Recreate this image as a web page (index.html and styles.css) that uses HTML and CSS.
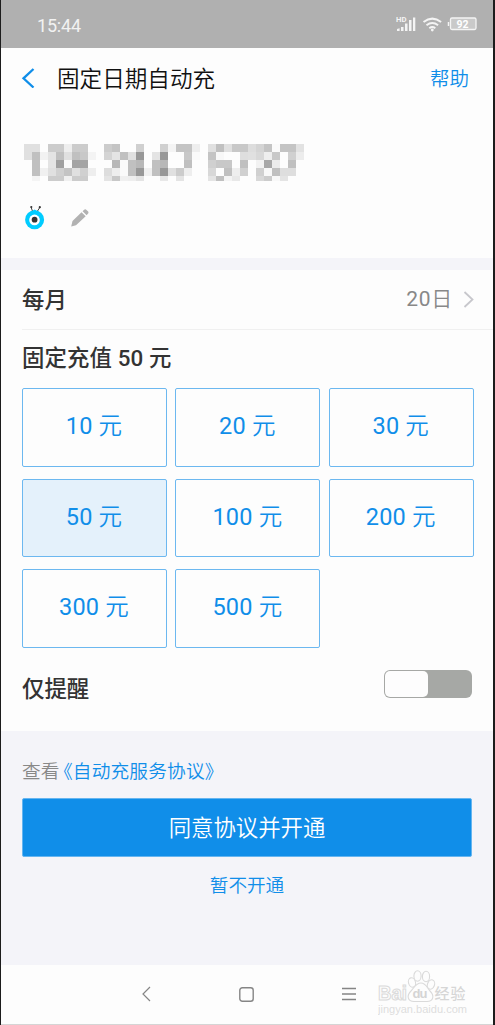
FILE: index.html
```html
<!DOCTYPE html>
<html lang="zh-CN">
<head>
<meta charset="utf-8">
<title>固定日期自动充</title>
<link rel="stylesheet" href="styles.css">
</head>
<body>
<div class="screen">
  <div class="status">
    <span class="time">15:44</span>
    <svg class="status-icons" width="82" height="18" viewBox="0 0 82 18" fill="none">
      <text class="hd" x="0" y="5.500" textLength="10.500" lengthAdjust="spacingAndGlyphs">HD</text>
      <path d="M1 15v-2l2.600-.7V15zM5 15v-4h2.500v4zM9 15V7.500h2.500V15zM13 15V4h2.500v11zM17 15V1.500h2.300V15z" fill="#f4f4f4"/>
      <path d="M27.500 6q8.800-6.800 17.600 0M30.500 9.200q5.800-4.300 11.600 0M33.300 12.200q3-2.200 6 0" stroke="#f4f4f4" stroke-width="2"/>
      <circle cx="36.300" cy="14" r="1.400" fill="#f4f4f4"/>
      <rect x="54.500" y="2" width="25.500" height="11.500" rx="1.500" fill="#c9c9c9" stroke="#f4f4f4" stroke-width="1.300"/>
      <path d="M52.500 6v4" stroke="#f4f4f4" stroke-width="1.500"/>
      <text class="pct" x="66.500" y="11.500">92</text>
    </svg>
  </div>
  <header class="nav">
    <svg class="back" width="14" height="20" viewBox="0 0 14 20" fill="none"><path d="M12.500 1L2.500 10.300l10 9.200" stroke="#108ee9" stroke-width="2.300"/></svg>
    <h1 class="title">固定日期自动充</h1>
    <a class="help">帮助</a>
  </header>
  <section class="account">
    <svg class="masked" id="masked" width="280" height="38" viewBox="0 0 280 38" shape-rendering="crispEdges"></svg>
    <div class="account-icons">
      <svg width="20" height="25" viewBox="0 0 20 25" fill="none">
        <path d="M7.600 6.500L6.200 2.500M12.500 6l2.300-3.500" stroke="#444" stroke-width="1"/>
        <circle cx="6.300" cy="2" r="1.100" fill="#333"/><circle cx="14.800" cy="2.200" r="1.100" fill="#333"/>
        <path d="M7 6.500L9.600 4.500l3 2z" fill="#0cf"/>
        <circle cx="9.600" cy="14.700" r="9.500" fill="#0cf"/>
        <circle cx="9.500" cy="14.900" r="5.300" fill="#fff"/><circle cx="9.600" cy="14.700" r="2.900" fill="#333"/>
      </svg>
      <svg class="pencil" width="18" height="18" viewBox="0 0 18 18" fill="#b2b2b2">
        <path d="M.2 17.600L1.500 12 10.500 3.200l4.200 4-9.700 9.100zM11.600 2.200l1.300-1.300c.9-.8 1.800-.8 2.600 0l1.400 1.400c.8.800.8 1.700 0 2.500l-1.300 1.400z"/>
      </svg>
    </div>
  </section>
  <main class="settings">
    <div class="month">
      <b class="label">每月</b>
      <span class="date">20<span class="thin">日</span></span>
      <svg width="12" height="17" viewBox="0 0 12 17" fill="none"><path d="M1.500 1l8 7.500-8 7.500" stroke="#c7c7cc" stroke-width="1.800"/></svg>
    </div>
    <h2 class="amount-title">固定充值 50 元</h2>
    <div class="amounts">
      <div class="amount">10 <span class="thin">元</span></div>
      <div class="amount">20 <span class="thin">元</span></div>
      <div class="amount">30 <span class="thin">元</span></div>
      <div class="amount selected">50 <span class="thin">元</span></div>
      <div class="amount">100 <span class="thin">元</span></div>
      <div class="amount">200 <span class="thin">元</span></div>
      <div class="amount">300 <span class="thin">元</span></div>
      <div class="amount">500 <span class="thin">元</span></div>
    </div>
    <div class="remind">
      <b class="label">仅提醒</b>
      <div class="switch"><div class="knob"></div></div>
    </div>
  </main>
  <footer class="actions">
    <p class="terms">查看<a class="terms-link">《自动充服务协议》</a></p>
    <div class="confirm">同意协议并开通</div>
    <a class="decline">暂不开通</a>
  </footer>
  <div class="system">
    <svg width="9" height="16" viewBox="0 0 9 16" fill="none" stroke="#858585" stroke-width="1.200"><path d="M8 1L1 8l7 7"/></svg>
    <svg width="15" height="15" viewBox="0 0 15 15" fill="none" stroke="#858585" stroke-width="1.400"><rect x=".8" y=".8" width="13.400" height="13.400" rx="2.500"/></svg>
    <svg width="14" height="14" viewBox="0 0 14 14" fill="none" stroke="#858585" stroke-width="1.300"><path d="M0 1.500h14M0 7h14M0 12.500h14"/></svg>
    <svg class="watermark" width="92" height="50" viewBox="0 0 92 50">
      <g fill="#fdfdfd" stroke="#dadada" stroke-width="1.100">
        <ellipse cx="34" cy="14.500" rx="3.500" ry="4.800" transform="rotate(-15 34 14.500)"/>
        <ellipse cx="39.500" cy="8" rx="3.600" ry="5.200"/>
        <ellipse cx="48" cy="8.500" rx="3.600" ry="5.200"/>
        <ellipse cx="53" cy="16.500" rx="3.500" ry="4.800" transform="rotate(20 53 16.500)"/>
        <path d="M43 15c5 0 6 5 9 8 5 5 3 10.500-3 10.500H36c-6 0-8-5.500-3-10.500 3-3 5-8 10-8z"/>
        <text class="wm-brand" x="0" y="31.500" textLength="29" lengthAdjust="spacingAndGlyphs">Bai</text>
      </g>
      <text class="wm-du" x="34.500" y="30" textLength="15">du</text>
      <text class="wm-cn" x="56.500" y="30.500" textLength="31">经验</text>
      <text class="wm-url" x="0" y="45" textLength="89" lengthAdjust="spacingAndGlyphs">jingyan.baidu.com</text>
    </svg>
  </div>
</div>
<script src="mosaic.js"></script>
</body>
</html>
```
FILE: styles.css
```css
* { box-sizing: border-box; }
body {
  margin: 0;
  height: 1025px;
  padding: 0 2px 0 1px;
  background: #1c1c1c;
  font-family: Roboto, "Noto Sans CJK SC", sans-serif;
  color: #333;
}
h1, h2, p { margin: 0; }
svg { display: block; flex: none; }
.screen {
  height: 1025px;
  background: #fdfdfd;
  display: flex;
  flex-direction: column;
  border-bottom: 1px solid #d5d5d5;
  overflow: hidden;
}
.status {
  flex: none;
  height: 48px;
  padding: 2px 15px 0 36px;
  display: flex;
  align-items: center;
  justify-content: space-between;
  background: #b0b0b0;
  color: #f2f2f2;
}
.time { font-size: 18px; letter-spacing: -.2px; }
.thin { font-weight: 350; }
.hd { font: bold 7px Roboto, sans-serif; fill: #f4f4f4; }
.pct { font: bold 10.500px Roboto, sans-serif; fill: #fff; text-anchor: middle; }
.nav {
  flex: none;
  height: 60px;
  padding: 0 24px 0 20px;
  display: flex;
  align-items: center;
}
.title {
  flex: 1;
  margin-left: 22px;
  padding-bottom: 2px;
  font-size: 22.600px;
  font-weight: 350;
  color: #111;
}
.help { padding-bottom: 2px; font-size: 19.500px; font-weight: 350; color: #108ee9; }
.account { flex: none; height: 150px; padding: 36px 23px 0; }
.account-icons { display: flex; gap: 26px; margin: 23px 0 0 1px; }
.pencil { margin-top: 4px; }
.settings {
  flex: none;
  height: 473px;
  border-top: 12px solid #f4f4f9;
  padding-left: 21px;
}
.month {
  height: 60px;
  display: flex;
  align-items: center;
  border-bottom: 1px solid #f0f0f0;
  padding-right: 18px;
}
.label { font-size: 22.400px; font-weight: 500; padding-bottom: 4px; }
.date { margin: 0 10px 0 auto; padding-bottom: 5px; font-size: 21px; letter-spacing: .7px; color: #888; }
.amount-title { height: 58px; line-height: 57px; font-size: 22.400px; font-weight: 500; letter-spacing: .1px; }
.amounts {
  display: grid;
  grid-template-columns: repeat(3, 145px);
  grid-auto-rows: 78.500px;
  gap: 12px 8.400px;
}
.amount {
  border: 1px solid #6cb8f0;
  border-radius: 2px;
  line-height: 74px;
  text-align: center;
  padding-right: 1px;
  font-size: 23.500px;
  letter-spacing: .2px;
  color: #108ee9;
}
.selected { background: #e4f1fb; }
.remind {
  height: 78px;
  display: flex;
  align-items: center;
  justify-content: space-between;
  padding: 5px 21px 0 0;
}
.switch {
  width: 88px;
  height: 28px;
  margin-bottom: 10px;
  padding: 1px;
  border-radius: 6px;
  background: #a6a8a5;
}
.knob { width: 43px; height: 26px; border-radius: 5px; background: #fdfdfd; }
.actions {
  flex: none;
  height: 234px;
  padding: 26px 21px 0;
  background: #f4f4f9;
  font-weight: 350;
}
.terms { height: 41px; line-height: 31px; font-size: 18.700px; color: #888; white-space: nowrap; }
.terms-link { color: #108ee9; margin-left: 4px; letter-spacing: .15px; font-feature-settings: "halt"; }
.confirm {
  height: 59px;
  line-height: 58px;
  text-align: center;
  border: 1px solid #65b5f0;
  border-radius: 2px;
  background: #108ee9;
  color: #fff;
  font-size: 22.400px;
}
.decline { display: block; padding-top: 13px; text-align: center; font-size: 18.600px; color: #108ee9; }
.system { height: 59px; display: flex; align-items: center; padding-left: 141px; padding-bottom: 1px; gap: 88px; position: relative; }
.watermark { position: absolute; left: 377px; top: 3px; }
.wm-brand { font: bold 20px "Liberation Sans", sans-serif; }
.wm-du { font: bold 13px "Liberation Sans", sans-serif; fill: #d4d4d4; }
.wm-cn { font: 500 15px "Noto Sans CJK SC", sans-serif; fill: #d6d6d6; }
.wm-url { font: 10px "Liberation Sans", sans-serif; fill: #ddd; }
```
FILE: mosaic.js
```js
// Grey levels of the masked phone number, one pair of hex digits per 8px cell.
const rows = [
  "e0e0ffcccceeccccffffccc4ffffd0ffffd0f4c4c4eeffe0c0e0c8c8ddd4c4fac4c4e2",
  "e0c0f2e4c0e0c0c8f4ffd4e4c0e098ffe498ffffc8faffc4f8ffffdee0d8eec8ffd0ec",
  "ffc0ffe4a0faa4a4ffffffb8fac0b8ffc0b8fefec0ffffd0c8c8ffc0fff2a8ecffc0ff",
  "ffc0f0e0d0c4e0d0eeffddeefac098f0c098e0cceeffffd8ffc0eed0ffd0f8c0dedeff",
  "fff4ffccccf0ccccffffe4c8f0eee4ffffe8ffe4ffffffe4c0f4e8ffffd8ccf8e4ffff"
];
const svg = document.getElementById("masked");
rows.forEach((row, y) => {
  row.match(/../g).forEach((v, x) => {
    if (v === "ff") return;
    const cell = document.createElementNS("http://www.w3.org/2000/svg", "rect");
    cell.setAttribute("x", x * 8);
    cell.setAttribute("y", y * 8);
    cell.setAttribute("width", 8);
    cell.setAttribute("height", y === 4 ? 5 : 8);
    cell.setAttribute("fill", "#" + v + v + v);
    svg.appendChild(cell);
  });
});
```
